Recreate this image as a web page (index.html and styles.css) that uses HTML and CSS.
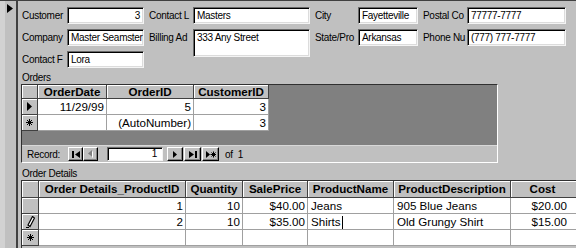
FILE: index.html
```html
<!DOCTYPE html>
<html>
<head>
<meta charset="utf-8">
<link rel="stylesheet" href="styles.css">
</head>
<body>
<div class="window">
  <div class="strip">
    <svg class="cur" width="6" height="9" viewBox="0 0 6 9"><path d="M0 0L6 4.5L0 9Z" fill="#000"/></svg>
  </div>
  <div class="main">
    <div class="form">
      <span class="lbl">Customer</span><div class="box num">3</div>
      <span class="lbl pad">Contact L</span><div class="box">Masters</div>
      <span class="lbl pad">City</span><div class="box">Fayetteville</div>
      <span class="lbl pad">Postal Co</span><div class="box">77777-7777</div>

      <span class="lbl">Company</span><div class="box">Master Seamster</div>
      <span class="lbl pad">Billing Ad</span><div class="box tall">333 Any Street</div>
      <span class="lbl pad">State/Pro</span><div class="box">Arkansas</div>
      <span class="lbl pad">Phone Nu</span><div class="box">(777) 777-7777</div>

      <span class="lbl">Contact F</span><div class="box">Lora</div>
    </div>

    <div class="caption cap-orders">Orders</div>
    <div class="sub">
      <div class="sheet">
        <div class="grid orders">
          <div class="hd sel"></div><div class="hd">OrderDate</div><div class="hd">OrderID</div><div class="hd">CustomerID</div>
          <div class="sel"><svg width="5" height="9" viewBox="0 0 5 9"><path d="M0 0L5 4.5L0 9Z" fill="#000"/></svg></div>
          <div class="cell r">11/29/99</div><div class="cell r">5</div><div class="cell r">3</div>
          <div class="sel"><svg width="7" height="7" viewBox="0 0 7 7"><path d="M3.5 0V7M0 3.5H7M1 1L6 6M6 1L1 6" stroke="#000" stroke-width="1"/></svg></div>
          <div class="cell r"></div><div class="cell r">(AutoNumber)</div><div class="cell r">3</div>
        </div>
      </div>
      <div class="nav">
        <span class="navlbl">Record:</span>
        <span class="btn first"><svg width="8" height="7" viewBox="0 0 8 7"><path d="M0 0H2V7H0Z M8 0V7L3 3.5Z" fill="#000"/></svg></span>
        <span class="btn"><svg width="5" height="8" viewBox="0 0 5 8"><path d="M5 1V8L1 4.5Z" fill="#fff"/><path d="M4 0V7L0 3.5Z" fill="#808080"/></svg></span>
        <span class="navbox">1</span>
        <span class="btn next"><svg width="4" height="7" viewBox="0 0 4 7"><path d="M0 0L4 3.5L0 7Z" fill="#000"/></svg></span>
        <span class="btn wide"><svg width="8" height="7" viewBox="0 0 8 7"><path d="M0 0L5 3.5L0 7Z M6 0H8V7H6Z" fill="#000"/></svg></span>
        <span class="btn wide"><svg width="10" height="7" viewBox="0 0 10 7"><path d="M0 0L4 3.5L0 7Z" fill="#000"/><path d="M7.5 0.5V6.5M4.5 3.5H10.5M5.5 1.5L9.5 5.5M9.5 1.5L5.5 5.5" stroke="#000" stroke-width="1"/></svg></span>
        <span class="of">of&nbsp; 1</span>
      </div>
    </div>

    <div class="caption cap-details">Order Details</div>
    <div class="details">
      <div class="grid od">
        <div class="hd sel"></div><div class="hd">Order Details_ProductID</div><div class="hd">Quantity</div><div class="hd">SalePrice</div><div class="hd">ProductName</div><div class="hd">ProductDescription</div><div class="hd last">Cost</div>

        <div class="sel"></div><div class="cell r">1</div><div class="cell r">10</div><div class="cell r">$40.00</div><div class="cell">Jeans</div><div class="cell">905 Blue Jeans</div><div class="cell r last">$20.00</div>

        <div class="sel"><svg width="9" height="12" viewBox="0 0 9 12"><path d="M6.5 0.5L8.5 2L4 10.5L2 9Z" fill="#fff" stroke="#000" stroke-width="1.2"/><path d="M0 11.5H3" stroke="#000" stroke-width="1"/></svg></div><div class="cell r">2</div><div class="cell r">10</div><div class="cell r">$35.00</div><div class="cell">Shirts<span class="caret"></span></div><div class="cell">Old Grungy Shirt</div><div class="cell r last">$15.00</div>

        <div class="sel"><svg width="7" height="7" viewBox="0 0 7 7"><path d="M3.5 0V7M0 3.5H7M1 1L6 6M6 1L1 6" stroke="#000" stroke-width="1"/></svg></div><div class="cell"></div><div class="cell"></div><div class="cell"></div><div class="cell"></div><div class="cell"></div><div class="cell last"></div>
      </div>
    </div>
  </div>
</div>
</body>
</html>
```

FILE: styles.css
```css
html, body {
  margin: 0;
  padding: 0;
}
body {
  width: 576px;
  height: 248px;
  overflow: hidden;
  background: #c0c0c0;
  font-family: "Liberation Sans", Arial, sans-serif;
  color: #000;
}
.window {
  display: flex;
  height: 247px;
  border-top: 1px solid #404040;
}
.strip {
  width: 16px;
  flex: none;
  background: linear-gradient(to right, #d2d2d2 0 5px, #c0c0c0 5px);
  border-right: 2px solid #404040;
  position: relative;
}
.cur {
  display: block;
  margin: 3px 0 0 7px;
}
.main {
  flex: 1;
  display: flex;
  flex-direction: column;
  min-width: 0;
}
.form {
  display: grid;
  grid-template-columns: 45px 77px 49px 117px 48px 60px 49px 99px;
  grid-auto-rows: 17px;
  row-gap: 5px;
  margin: 6px 0 0 4px;
  font-size: 10px;
  letter-spacing: -0.3px;
}
.lbl {
  line-height: 17px;
  white-space: nowrap;
  overflow: hidden;
}
.lbl.pad {
  padding-left: 5px;
}
.box {
  box-sizing: border-box;
  height: 17px;
  background: #fff;
  border: 1px solid;
  border-color: #6a6a6a #f4f4f4 #f4f4f4 #6a6a6a;
  box-shadow: inset 1px 1px #000, inset -1px -1px #dcdcdc;
  padding: 0 3px;
  line-height: 15px;
  white-space: nowrap;
  overflow: hidden;
}
.box.num {
  text-align: right;
}
.box.tall {
  height: 28px;
  grid-row: span 2;
  align-self: start;
}
.caption {
  font-size: 10px;
  letter-spacing: -0.3px;
  line-height: 13px;
  height: 13px;
  padding-left: 4px;
}
.cap-orders {
  margin-top: 3px;
}
.sub {
  box-sizing: border-box;
  margin-left: 3px;
  width: 477px;
  height: 79px;
  border: 1px solid;
  border-color: #303030 #fff #fff #303030;
  display: flex;
  flex-direction: column;
}
.sheet {
  height: 60px;
  background: #808080;
}
.grid {
  display: grid;
  font-size: 11.6px;
}
.orders {
  grid-template-columns: 16px 69px 87px 75px;
  grid-template-rows: 14px 16px 16px;
  width: 247px;
}
.od {
  grid-template-columns: 17px 147px 57px 65px 86px 117px 67px;
  grid-template-rows: 17px 16px 16px 16px;
}
.hd, .sel {
  box-sizing: border-box;
  background: #c0c0c0;
  border-right: 1px solid #404040;
  border-bottom: 1px solid #404040;
  box-shadow: inset 1px 1px #fff;
  font-weight: bold;
  text-align: center;
  white-space: nowrap;
  overflow: hidden;
}
.orders .hd {
  line-height: 13px;
}
.od .hd {
  line-height: 16px;
}
.od .hd.last {
  padding-right: 3px;
}
.sel {
  display: flex;
  align-items: center;
  justify-content: center;
}
.cell {
  box-sizing: border-box;
  background: #fff;
  border-right: 1px solid #a0a0a0;
  border-bottom: 1px solid #a0a0a0;
  padding: 0 2px 0 3px;
  line-height: 15px;
  white-space: nowrap;
  overflow: hidden;
}
.cell.r {
  text-align: right;
}
.cell.last {
  padding-right: 10px;
}
.caret {
  display: inline-block;
  width: 1px;
  height: 13px;
  background: #000;
  vertical-align: -3px;
  margin-left: 1px;
}
.nav {
  flex: 1;
  display: flex;
  align-items: center;
  background: #c0c0c0;
  border-top: 1px solid #d8d8d8;
  font-size: 10px;
  letter-spacing: -0.3px;
  padding-left: 5px;
}
.navlbl {
  width: 41px;
}
.btn {
  box-sizing: border-box;
  width: 15px;
  height: 14px;
  background: #c0c0c0;
  border: 1px solid;
  border-color: #fff #000 #000 #fff;
  box-shadow: inset -1px -1px #808080;
  display: flex;
  align-items: center;
  justify-content: center;
}
.btn.next {
  width: 16px;
  margin-left: 4px;
}
.btn.wide {
  width: 17px;
  margin-left: 1px;
}
.navbox {
  box-sizing: border-box;
  width: 56px;
  height: 14px;
  margin-left: 9px;
  background: #fff;
  border: 1px solid;
  border-color: #6a6a6a #f4f4f4 #f4f4f4 #6a6a6a;
  box-shadow: inset 1px 1px #000;
  text-align: right;
  padding-right: 5px;
  line-height: 12px;
}
.of {
  margin-left: 6px;
}
.cap-details {
  margin-top: 4px;
}
.details {
  margin-left: 3px;
  border-left: 1px solid #303030;
  border-top: 1px solid #303030;
  flex: 1;
  overflow: hidden;
}
```
